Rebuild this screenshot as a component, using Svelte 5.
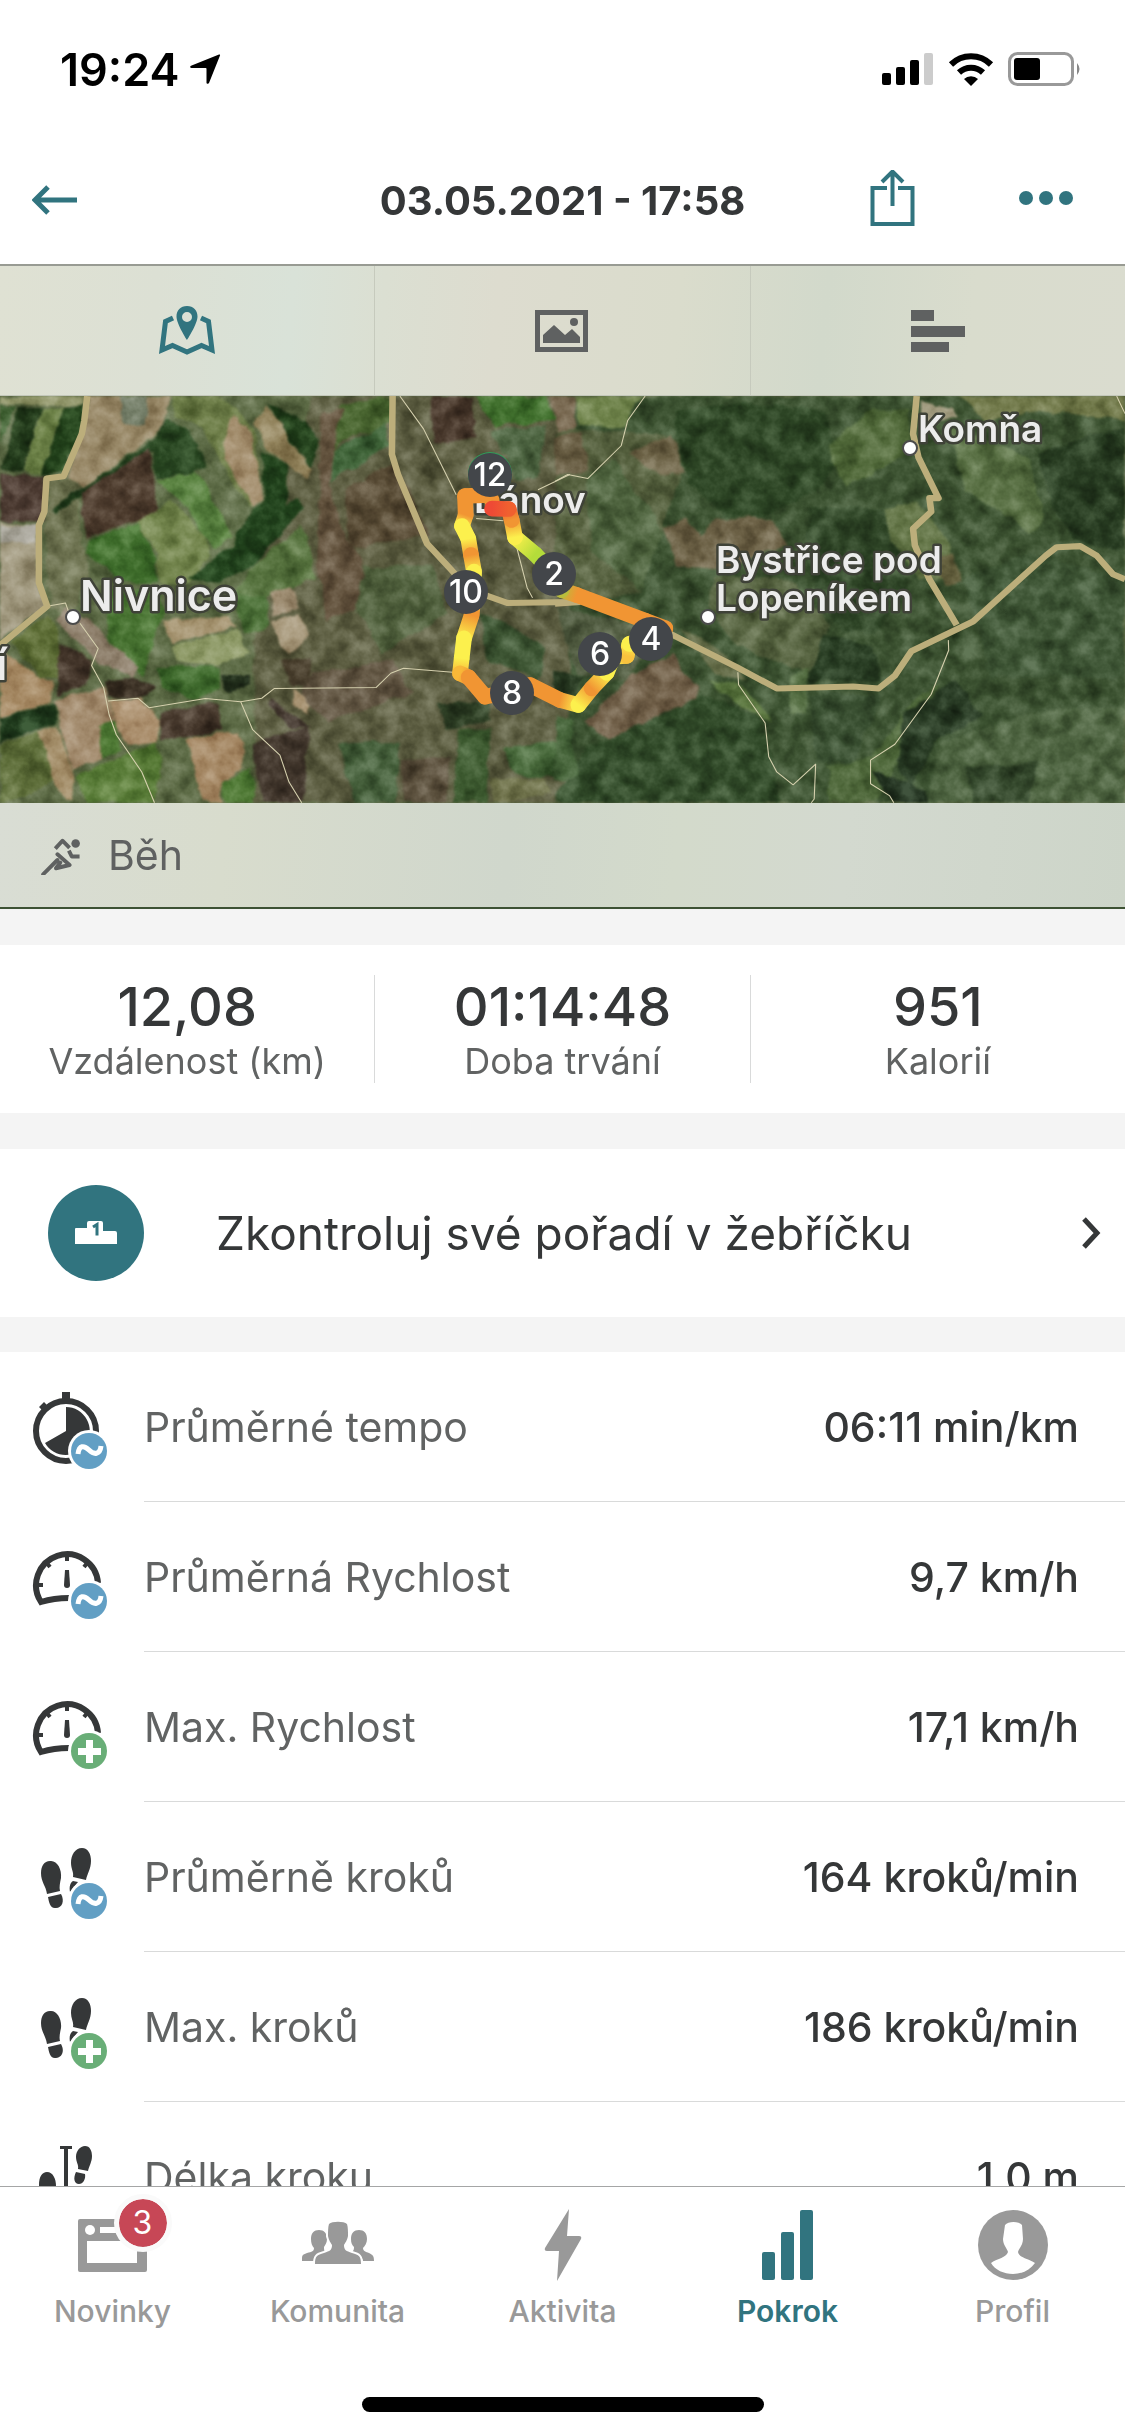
<script>
  const stats = [
    { value: "12,08", label: "Vzdálenost (km)" },
    { value: "01:14:48", label: "Doba trvání" },
    { value: "951", label: "Kalorií" },
  ];

  const details = [
    { icon: "watch", badge: "avg", label: "Průměrné tempo", value: "06:11 min/km" },
    { icon: "gauge", badge: "avg", label: "Průměrná Rychlost", value: "9,7 km/h" },
    { icon: "gauge", badge: "max", label: "Max. Rychlost", value: "17,1 km/h" },
    { icon: "steps", badge: "avg", label: "Průměrně kroků", value: "164 kroků/min" },
    { icon: "steps", badge: "max", label: "Max. kroků", value: "186 kroků/min" },
    { icon: "stride", badge: "", label: "Délka kroku", value: "1,0 m" },
  ];

  const nav = [
    { id: "news", label: "Novinky", count: 3 },
    { id: "community", label: "Komunita" },
    { id: "activity", label: "Aktivita" },
    { id: "progress", label: "Pokrok", active: true },
    { id: "profile", label: "Profil" },
  ];

  const markers = [
    { km: 12, x: 490, y: 475 },
    { km: 10, x: 466, y: 592 },
    { km: 8, x: 512, y: 693 },
    { km: 6, x: 600, y: 654 },
    { km: 4, x: 651, y: 639 },
    { km: 2, x: 554, y: 574 },
  ];

  const towns = [
    { x: 80, y: 611, size: 43, name: "Nivnice" },
    { x: -4, y: 680, size: 43, name: "í" },
    { x: 918, y: 442, size: 37, name: "Komňa" },
    { x: 716, y: 573, size: 37, name: "Bystřice pod" },
    { x: 716, y: 611, size: 37, name: "Lopeníkem" },
    { x: 474, y: 513, size: 37, name: "Bánov" },
  ];

  const dots = [
    [73, 617],
    [910, 448],
    [708, 617],
  ];

  const orange = "#f19533";
  const yellow = "#fcf04d";
  const red = "#ee4a35";

  // route points: x, y, pace colour
  const route = [
    [275, 180, orange],
    [265, 165, orange],
    [195, 168, orange],
    [197, 225, orange],
    [186, 258, yellow],
    [205, 296, yellow],
    [213, 345, orange],
    [222, 395, yellow],
    [222, 450, yellow],
    [215, 525, orange],
    [192, 595, yellow],
    [185, 655, yellow],
    [180, 700, "#f8b838"],
    [206, 712, orange],
    [255, 770, orange],
    [335, 755, orange],
    [390, 735, orange],
    [480, 780, orange],
    [535, 795, yellow],
    [575, 745, orange],
    [620, 698, yellow],
    [640, 650, yellow],
    [680, 648, "#f9c23e"],
    [688, 612, yellow],
    [750, 590, orange],
    [796, 565, orange],
    [735, 542, orange],
    [530, 465, orange],
    [485, 450, "#b9bd3c"],
    [460, 400, "#b4dc3a"],
    [405, 342, "#b4dc3a"],
    [345, 292, yellow],
    [335, 240, orange],
    [326, 207, "#f0602f"],
    [276, 206, red],
  ];

  const segments = route.slice(1).map((to, i) => ({ from: route[i], to }));

  const westFields = [
    ["#5b5c40", "860,18 1568,18 1568,1221 700,1221 700,500"],
    ["#8f9468", "0,18 240,18 230,45 0,40"],
    ["#39592c", "0,45 45,50 0,160"],
    ["#1f3618", "50,50 115,50 60,245 5,235"],
    ["#6d8248", "115,50 175,50 115,247 62,245"],
    ["#1f3d18", "175,50 230,45 222,130 178,245 115,250"],
    ["#4a3930", "0,250 125,255 120,390 0,385"],
    ["#a0987e", "0,390 100,400 105,560 125,635 0,745"],
    ["#aaa79c", "0,400 100,400 100,448 0,452"],
    ["#6d7250", "135,270 180,260 230,180 260,200 215,300 220,420 240,560 200,660 140,640 120,420"],
    ["#978766", "250,18 465,18 455,110 340,200 230,290 195,260"],
    ["#76806a", "330,18 410,18 400,110 340,100"],
    ["#203c1b", "465,85 420,150 140,350 150,365 260,290 430,180 520,130"],
    ["#4b3a2c", "415,170 425,270 430,370 235,440 225,300"],
    ["#26431f", "470,90 520,120 570,230 500,250 430,265 420,160"],
    ["#6f7f4a", "470,18 600,18 700,110 710,210 715,330 690,350 620,240 560,110 480,80"],
    ["#a08a69", "640,80 680,100 705,200 722,325 700,350 630,230 612,160"],
    ["#8f8059", "735,45 785,120 860,235 845,262 740,180 700,95"],
    ["#1d3917", "740,40 810,70 880,150 855,228 795,150"],
    ["#5c8443", "430,270 540,240 580,300 640,430 590,480 500,330"],
    ["#3d6b2a", "240,445 385,395 430,500 435,575 340,570 230,480"],
    ["#71834b", "380,390 470,320 560,430 580,490 520,575 440,575 430,480"],
    ["#55713d", "680,540 830,400 870,560 720,620 650,600"],
    ["#20401b", "720,180 790,220 790,340 820,320 835,350 700,520 600,570 520,560 640,460 650,420 725,330"],
    ["#45702f", "300,590 440,590 450,660 400,850 300,760"],
    ["#8b7c68", "185,640 240,680 380,820 360,850 260,800 150,680"],
    ["#a18f6b", "445,680 630,668 650,708 475,748"],
    ["#8b9764", "475,755 655,712 685,780 590,818 485,800"],
    ["#4c7038", "640,600 730,610 740,700 670,720"],
    ["#9c8b70", "740,600 800,580 825,640 750,665"],
    ["#a6977a", "745,685 820,660 850,725 800,785 775,775"],
    ["#5b6b34", "30,745 135,660 160,720 160,850 110,855"],
    ["#423429", "160,750 250,800 240,870 160,910"],
    ["#a2855f", "0,770 110,855 150,860 145,920 0,970"],
    ["#1e381b", "0,970 150,925 155,985 0,1045"],
    ["#5c6c38", "0,1050 105,1010 150,1160 20,1221 0,1221"],
    ["#a0886a", "150,920 290,880 320,1030 280,1095 200,1120"],
    ["#a18b66", "105,1010 160,990 208,1150 200,1221 185,1215 150,1165"],
    ["#4f7a35", "270,1000 310,985 335,1060 285,1090"],
    ["#33291e", "290,870 360,850 430,880 400,910 300,915"],
    ["#a98d6b", "300,920 385,912 440,980 430,1040 350,1050 315,1000"],
    ["#557834", "210,1140 430,1040 450,1110 420,1221 240,1221"],
    ["#3f6a2d", "430,820 605,820 605,890 540,915 450,880"],
    ["#202c1a", "610,840 690,840 690,870 620,900"],
    ["#45372b", "440,950 600,925 612,1010 440,1035"],
    ["#a1835f", "510,1030 660,1010 670,1120 610,1160 610,1221 560,1221"],
    ["#4d7733", "610,1160 690,1120 705,1221 620,1221"],
    ["#40352b", "690,1050 790,1010 850,1000 830,1221 720,1221"],
    ["#3d322a", "750,915 860,1000 800,1000 740,930"],
    ["#a48f6e", "800,890 855,910 850,960 800,930"],
    ["#453b2a", "775,800 860,790 850,880 800,880"],
    ["#48642f", "930,50 1070,18 1070,100 930,160 900,250"],
    ["#3f6338", "920,180 1060,100 1070,170 900,270"],
    ["#62523d", "880,60 940,60 900,280 960,460 1000,500 1000,640 900,680 870,500 880,300"],
    ["#574a34", "950,300 1085,210 1180,430 960,470"],
    ["#453529", "1185,18 1300,18 1310,140 1200,160"],
    ["#3f6e2c", "1310,18 1500,18 1530,90 1360,110"],
    ["#75654d", "1510,18 1568,18 1568,130 1530,90"],
    ["#4c6340", "1350,120 1500,110 1480,260 1420,270"],
    ["#625643", "860,830 1080,800 1130,900 900,980 830,900"],
    ["#4e5e3b", "1000,520 1190,520 1230,660 1050,780 980,650"],
    ["#3c5432", "1320,660 1420,700 1500,760 1480,860 1340,800"],
    ["#435d39", "930,1050 1100,1040 1090,1221 980,1221"],
    ["#5a4f3c", "1100,1100 1240,1080 1230,1221 1110,1221"],
    ["#3c592f", "1260,1000 1350,1010 1340,1221 1250,1221"],
    ["#2e3f25", "1200,930 1350,920 1350,980 1230,1000"],
    ["#6d7049", "1350,1150 1500,1150 1520,1200 1360,1221"],
    ["#47683a", "1380,1060 1568,1040 1568,1150 1420,1140"],
  ];

  const eastFields = [
    ["#3b5130", "40,18 1568,18 1568,1221 40,1221"],
    ["#545f3d", "0,110 300,130 350,250 300,400 240,600 60,620 0,560"],
    ["#6c8048", "60,18 240,18 190,110 60,100"],
    ["#75654d", "0,18 60,18 50,110 0,130"],
    ["#64593f", "0,140 70,120 90,240 0,250"],
    ["#4d623d", "90,260 160,200 300,420 240,600 100,480"],
    ["#6a6044", "320,130 360,250 290,260 210,190"],
    ["#2c4424", "330,60 500,40 740,60 780,200 720,300 560,380 470,370 380,290 340,180"],
    ["#4f6738", "750,170 880,50 975,60 980,180 800,290"],
    ["#a09a7e", "1010,30 1090,50 1110,80 1010,100"],
    ["#6f7748", "1110,18 1568,18 1568,90 1340,60 1180,90"],
    ["#566d41", "1080,100 1300,200 1350,380 1310,420 1130,300"],
    ["#263a20", "1330,180 1568,110 1568,480 1420,440 1350,300"],
    ["#6b6045", "300,400 360,380 400,430 440,380 600,380 640,460 450,530 330,520"],
    ["#566340", "440,550 640,560 760,700 700,840 500,760 420,640"],
    ["#2d4325", "700,350 900,350 980,600 870,720 790,720 680,500"],
    ["#5f7143", "910,350 1000,330 1080,440 1120,560 1000,560 920,450"],
    ["#65613f", "1040,500 1100,480 1120,570 1070,570"],
    ["#4f5a3f", "0,640 200,690 300,700 200,860 60,840"],
    ["#25361f", "0,830 80,850 50,900 0,890"],
    ["#6e5d46", "80,980 210,850 320,780 400,880 280,1070 210,1000 150,1040"],
    ["#626a46", "350,710 450,760 530,860 440,840"],
    ["#5f7a43", "420,860 510,870 605,985 500,930"],
    ["#304928", "90,1060 400,900 570,970 620,1221 0,1221 20,1170"],
    ["#456339", "0,960 50,980 60,1140 0,1160"],
    ["#536c41", "640,850 700,820 690,950 650,960"],
    ["#263a21", "740,720 880,760 900,860 700,860"],
    ["#384e30", "700,900 900,900 820,1100 720,1100"],
    ["#4d6639", "750,1110 870,1090 1000,900 1060,870 1000,1000 880,1221 750,1221"],
    ["#263822", "960,960 1100,860 1180,960 1050,1030 980,1180 940,1100"],
    ["#3d5434", "1130,560 1300,480 1568,560 1568,850 1200,850"],
    ["#4b613e", "1060,1040 1300,960 1568,930 1568,1221 1020,1221"],
    ["#34482c", "1130,1120 1330,1100 1300,1221 1150,1221"],
    ["#1f2e1d", "870,1130 1020,1180 1020,1221 930,1221"],
  ];

  const westRoads = {
    major: [
      "240,18 232,90 225,130 175,255 128,262 122,360 107,400 107,570 130,640 0,755",
      "1080,18 1078,190 1095,250 1175,455 1240,530 1290,590 1395,630 1568,627",
    ],
    minor: [
      "130,640 180,630 190,660",
      "220,690 270,765 252,815 285,880 300,960 320,1020 390,1130 425,1221",
      "297,920 380,912 410,940 565,913 662,922 720,912 755,883 1035,880 1075,838 1110,823 1245,835",
      "662,922 695,1005 770,1080 795,1160 830,1221",
      "1100,18 1165,115 1255,310",
      "1480,295 1568,250",
      "1310,380 1385,387",
      "1420,460 1450,585 1465,615",
    ],
  };

  const eastRoads = {
    major: [
      "995,18 985,130 1000,200 1055,320 1030,320 1035,360 985,410 990,460 1030,560 1105,695",
      "0,632 70,627",
      "300,712 500,820 610,883 820,877 890,883 935,845 980,773 1150,685 1350,490 1380,465 1445,462 1490,490 1535,545 1568,560",
    ],
    minor: [
      "248,18 200,90 182,165 90,262 35,250 0,270",
      "503,835 505,872 578,985 588,1085 610,1130 655,1168 717,1107 713,1210 705,1221",
      "1082,740 1083,770 1035,900 935,1048 868,1095 868,1165 920,1200 932,1221",
      "1545,18 1568,70",
    ],
  };

  const noRoads = { major: [], minor: [] };
</script>

{#snippet tile(x, fields, roads)}
  <svg {x} y="390" width="570" height="530" viewBox="0 0 1568 1568" preserveAspectRatio="none">
    {#each fields as [fill, points]}
      <polygon {fill} {points} />
    {/each}
    {#each roads.minor as points}
      <polyline class="minor-road" {points} />
    {/each}
    {#each roads.major as points}
      <polyline class="major-road" {points} />
    {/each}
  </svg>
{/snippet}

<div class="app">
  <div class="status">
    <div class="clock">
      19:24
      <svg width="32" height="32" viewBox="0 0 32 32" aria-hidden="true">
        <path d="M30 1.500c.8-.3 1.300.3 1 1L20 30c-.5 1.200-2.500 1-2.500-.3V16c0-.7-.3-1-1-1H2.500C1 15 .5 13.500 2 12.800z" />
      </svg>
    </div>
    <div class="signals">
      <svg width="52" height="34" viewBox="0 0 52 34" aria-hidden="true">
        <rect x="0" y="21" width="9" height="12" rx="2" />
        <rect x="14" y="15" width="9" height="18" rx="2" />
        <rect x="28" y="8" width="9" height="25" rx="2" />
        <rect x="42" y="1" width="9" height="32" rx="2" fill="#ccc" />
      </svg>
      <svg width="46" height="34" viewBox="0 0 46 34" aria-hidden="true">
        <path
          d="M3 12.500a28.500 28.500 0 0 1 40 0M11 20.500a17.500 17.500 0 0 1 24 0"
          fill="none"
          stroke="#000"
          stroke-width="6"
        />
        <path d="M16 27a10 10 0 0 1 14 0l-7 7z" />
      </svg>
      <svg width="74" height="34" viewBox="0 0 74 34" aria-hidden="true">
        <rect x="1.500" y="1.500" width="63" height="31" rx="8" fill="none" stroke="#999" stroke-width="3" />
        <rect x="6" y="6" width="26" height="22" rx="3" />
        <path d="M69 11q5 6 0 12z" fill="#888" />
      </svg>
    </div>
  </div>

  <header>
    <button class="back" aria-label="Zpět">
      <svg width="46" height="32" viewBox="0 0 46 32">
        <path d="M45 16H4M16 3 3 16l13 13" fill="none" stroke="currentColor" stroke-width="5" />
      </svg>
    </button>
    <h1>03.05.2021 - 17:58</h1>
    <div class="actions">
      <button aria-label="Sdílet">
        <svg width="46" height="60" viewBox="0 0 46 60">
          <path
            d="M17 18H2.500v36h40V18H28M22.500 36V2M12 12 22.500 1.500 33 12"
            fill="none"
            stroke="currentColor"
            stroke-width="4"
          />
        </svg>
      </button>
      <button aria-label="Více">
        <svg width="54" height="60" viewBox="0 0 54 60" fill="currentColor">
          <circle cx="7" cy="28" r="7" />
          <circle cx="27" cy="28" r="7" />
          <circle cx="47" cy="28" r="7" />
        </svg>
      </button>
    </div>
  </header>

  <main>
    <div class="tabs">
      <button class="selected" aria-label="Mapa">
        <svg width="58" height="52" viewBox="0 0 58 52" fill="none" stroke="currentColor" stroke-width="5">
          <path d="M15 13 7.500 16.500 4 45l10.500-4.500L29 47l14.500-6.500L54 45l-3.500-28.500L43 13" />
          <path
            d="M29 1C22.500 1 18.500 5.500 18.500 11.500 18.500 19 29 35 29 35s10.500-16 10.500-23.500C39.500 5.500 35.500 1 29 1zm0 6a5 5 0 1 1 0 10 5 5 0 0 1 0-10z"
            fill="currentColor"
            stroke="none"
          />
        </svg>
      </button>
      <button aria-label="Fotky">
        <svg width="54" height="44" viewBox="0 0 54 44" fill="currentColor">
          <path d="M0 1h53v42H0zM5 6v32h43V6z" fill-rule="evenodd" />
          <path d="M8 34v-8l11-10 11 10 7-6 8 8v6z" />
          <circle cx="39" cy="13" r="4" />
        </svg>
      </button>
      <button aria-label="Grafy">
        <svg width="54" height="44" viewBox="0 0 54 44" fill="currentColor">
          <path d="M0 1h23v11H0zM0 17h54v11H0zM0 33h38v10H0z" />
        </svg>
      </button>
    </div>

    <svg class="map" viewBox="0 396 1125 407" preserveAspectRatio="xMidYMid slice" role="img" aria-label="Trasa běhu">
      <defs>
        <filter id="grain" x="0" y="0" width="100%" height="100%" color-interpolation-filters="sRGB">
          <feTurbulence type="fractalNoise" baseFrequency="0.050" numOctaves="4" seed="21" />
          <feColorMatrix values="1.400 0 0 0 -0.150  1.400 0 0 0 -0.150  1.400 0 0 0 -0.150  0 0 0 0 1" />
        </filter>
        <filter id="edges" x="0" y="0" width="100%" height="100%" color-interpolation-filters="sRGB">
          <feTurbulence type="fractalNoise" baseFrequency="0.050" numOctaves="3" seed="3" result="noise" />
          <feDisplacementMap in="SourceGraphic" in2="noise" scale="10" xChannelSelector="R" yChannelSelector="G" />
          <feGaussianBlur stdDeviation="1" />
        </filter>
        {#each segments as { from, to }, i}
          <linearGradient
            id="pace-{i}"
            gradientUnits="userSpaceOnUse"
            x1={from[0]}
            y1={from[1]}
            x2={to[0]}
            y2={to[1]}
          >
            <stop offset="0" stop-color={from[2]} />
            <stop offset="1" stop-color={to[2]} />
          </linearGradient>
        {/each}
      </defs>

      <rect y="390" width="1125" height="420" fill="#5c6a45" />
      <g filter="url(#edges)">
        {@render tile(0, westFields, noRoads)}
        {@render tile(555, eastFields, noRoads)}
      </g>
      <rect class="grain" y="390" width="1125" height="420" filter="url(#grain)" />
      {@render tile(0, [], westRoads)}
      {@render tile(555, [], eastRoads)}

      {#each dots as [cx, cy]}
        <circle {cx} {cy} r="7" fill="#fff" stroke="#4b4b4b" stroke-width="2" />
      {/each}
      {#each towns as town}
        <text class="town" x={town.x} y={town.y} font-size={town.size}>{town.name}</text>
      {/each}

      <svg x="400" y="440" width="300" height="300" viewBox="0 0 900 900">
        {#each segments as { from, to }, i}
          <path
            d="M{from[0]} {from[1]}L{to[0]} {to[1]}"
            stroke="url(#pace-{i})"
            stroke-width="47"
            stroke-linecap="round"
          />
        {/each}
      </svg>

      <circle cx="490" cy="474" r="22" fill="#2f9e5b" />
      {#each markers as marker}
        <circle cx={marker.x} cy={marker.y} r="22" fill="#43464a" />
        <text class="km" x={marker.x} y={marker.y + 11}>{marker.km}</text>
      {/each}
    </svg>

    <div class="sport">
      <svg width="40" height="40" viewBox="0 0 112 112" fill="none" stroke="currentColor" stroke-width="11" aria-hidden="true">
        <circle cx="97" cy="24" r="12" fill="currentColor" stroke="none" />
        <path d="M40 38 60 16l20 20M78 44l8 16h22" stroke-linejoin="round" />
        <path d="M6 110 46 70M46 54 80 84l-38 9 12-16" stroke-linejoin="round" stroke-linecap="round" />
      </svg>
      <span>Běh</span>
    </div>

    <dl class="stats">
      {#each stats as stat}
        <div class="stat">
          <dt>{stat.label}</dt>
          <dd>{stat.value}</dd>
        </div>
      {/each}
    </dl>

    <a class="ranking" href="#ranking">
      <span class="podium">
        <svg width="42" height="24" viewBox="0 0 42 24" aria-hidden="true">
          <path d="M1 7h11V2q0-2 2-2h12q2 0 2 2v8h12q2 0 2 2v11H0V8q0-1 1-1z" fill="#fff" />
          <path d="M18 6l4-2.500v11" fill="none" stroke="#31747f" stroke-width="3" />
        </svg>
      </span>
      <span class="ranking-text">Zkontroluj své pořadí v žebříčku</span>
      <svg width="20" height="32" viewBox="0 0 20 32" aria-hidden="true">
        <path d="M3 2l13 14L3 30" fill="none" stroke="currentColor" stroke-width="5" />
      </svg>
    </a>

    <ul class="details">
      {#each details as row}
        <li>
          <svg class="row-icon" width="80" height="90" viewBox="0 0 80 90" aria-hidden="true">
            {#if row.icon === "watch"}
              <circle cx="34" cy="49" r="30" class="line" />
              <path d="M34 49V25A24 24 0 1 1 13 61z" />
              <path d="M30 10h8v9h-8zM7 25l5-5 6 6-5 5z" />
            {:else if row.icon === "gauge"}
              <path class="line" d="M66 51A31 31 0 1 0 9 70Q22 66 37 66" />
              <path d="M35 22v7M4 53h7M14 30l4 5M56 30l-4 5" fill="none" stroke="#353738" stroke-width="4" />
              <path d="M33 38h4l1 15a3 3 0 0 1-6 0z" />
            {:else if row.icon === "steps"}
              <path d="M18 29c7-1 12 8 11 17-1 5-2 9-1 13l-13 3C14 54 9 50 9 41c0-7 3-12 9-12zM16 65l13-3c4 7 1 14-5 14-6 1-7-6-8-11z" />
              <path d="M50 16c6 0 9 6 9 13 0 8-4 13-5 19l-13-3c1-5-2-8-2-14 0-8 4-15 11-15zM41 49l5 1-8 10c-1-5 0-9 3-11z" />
            {:else}
              <path d="M28 14h12v3h-4v60h-4V17h-4z" />
              <path d="M53 14c5 0 7 5 7 10 0 6-3 10-4 15l-10-2c1-4-2-7-2-12 0-6 4-11 9-11zM44 40l9 2c1 5-2 10-6 10-5 0-6-6-3-12z" />
              <path d="M15 40c6 0 9 7 9 14l-2 14-11 2c0-7-4-10-4-17 0-8 3-13 8-13z" />
            {/if}
            {#if row.badge}
              <circle cx="57" cy="69" r="21" fill="#fff" />
              <circle cx="57" cy="69" r="18" fill={row.badge === "avg" ? "#629fc4" : "#69ae77"} />
            {/if}
            {#if row.badge === "avg"}
              <path d="M46 72c1-9 6-9 11-4s11 5 12-4" fill="none" stroke="#fff" stroke-width="5" />
            {:else if row.badge === "max"}
              <path d="M54 58h7v8h8v7h-8v8h-7v-8h-8v-7h8z" fill="#fff" />
            {/if}
          </svg>
          <div class="row-body">
            <span class="row-label">{row.label}</span>
            <span class="row-value">{row.value}</span>
          </div>
        </li>
      {/each}
    </ul>
  </main>

  <nav>
    <div class="nav-items">
      {#each nav as item}
        <a href="#{item.id}" class:active={item.active}>
          <span class="nav-icon">
            <svg width="72" height="72" viewBox="0 0 72 72" fill="currentColor" aria-hidden="true">
              {#if item.id === "news"}
                <path
                  d="M3 10h65q2 0 2 2v49q0 2-2 2H3q-2 0-2-2V12q0-2 2-2zM10 32v22h50V32z"
                  fill-rule="evenodd"
                />
                <path d="M23 18h20v6H23z" fill="#fff" />
                <circle cx="13" cy="21" r="5" fill="#fff" />
              {:else if item.id === "community"}
                <path d="M17 21c5 0 8 3 8 9 0 4-2 6-3 8 0 2 0 3 1 5-6 3-10 4-11 9H0c0-6 0-6 5-8 5-1 7-2 7-5-2-2-3-5-3-9 0-6 3-9 8-9z" />
                <path d="M57 21c5 0 8 3 8 9 0 4-2 7-4 9 0 3 3 4 6 5 4 2 5 3 5 8H61c-1-5-5-6-11-9 2-2 2-3 2-5-2-2-3-4-3-8 0-6 3-9 8-9z" />
                <path
                  d="M27 15c3-3 15-3 18 0 1 3 1 8 1 12-1 5-3 7-4 9 0 5 2 6 8 8 7 2 9 3 9 11H13c0-8 2-9 9-11 6-2 8-3 8-8-1-2-3-4-4-9 0-4 0-9 1-12z"
                  stroke="#fff"
                  stroke-width="4"
                  paint-order="stroke"
                />
              {:else if item.id === "activity"}
                <path d="M42 0 18 39q-1 3 2 3h12l-2 30 24-42q1-3-2-3H40z" />
              {:else if item.id === "progress"}
                <rect x="10" y="43" width="13" height="28" rx="2" />
                <rect x="29" y="23" width="13" height="48" rx="2" />
                <rect x="48" y="1" width="13" height="70" rx="2" />
              {:else}
                <circle cx="36" cy="36" r="35" />
                <path
                  d="M28 16c3-4 14-4 17 0l1 14c0 6-4 9-5 13 1 6 10 6 17 11-5 7-13 11-22 11S18 61 14 54c7-5 15-5 17-11-1-4-5-7-5-13z"
                  fill="#fff"
                />
              {/if}
            </svg>
            {#if item.count}
              <span class="count">{item.count}</span>
            {/if}
          </span>
          {item.label}
        </a>
      {/each}
    </div>
    <div class="home-bar"></div>
  </nav>
</div>

<style>
  :global(body) {
    margin: 0;
    background: #fff;
  }

  .app {
    display: flex;
    flex-direction: column;
    height: 100vh;
    font-family: Inter, "Liberation Sans", sans-serif;
    color: #353738;
    background: #fff;
  }

  button {
    display: flex;
    align-items: center;
    justify-content: center;
    padding: 0;
    border: 0;
    background: none;
    color: inherit;
  }

  svg {
    flex: none;
  }

  .status {
    display: flex;
    align-items: center;
    justify-content: space-between;
    height: 138px;
    padding: 0 43px 0 60px;
    box-sizing: border-box;
    flex: none;
    color: #000;
  }

  .clock {
    display: flex;
    align-items: center;
    gap: 10px;
    font-size: 45px;
    font-weight: 600;
  }

  .signals {
    display: flex;
    gap: 14px;
  }

  header {
    display: grid;
    grid-template-columns: 1fr auto 1fr;
    align-items: center;
    height: 126px;
    padding: 0 32px 2px;
    flex: none;
    box-sizing: border-box;
    color: #31747f;
  }

  .back {
    justify-self: start;
  }

  h1 {
    margin: 0;
    font-size: 40px;
    font-weight: 700;
    color: #353738;
  }

  .actions {
    display: flex;
    justify-content: flex-end;
    gap: 103px;
    padding-right: 20px;
  }

  main {
    flex: 1;
    min-height: 0;
    overflow: hidden;
    background: #f4f4f4;
  }

  .tabs {
    display: flex;
    height: 132px;
    box-sizing: border-box;
    border-top: 2px solid #989b93;
    border-bottom: 1px solid #c3c7ba;
    color: #5f6161;
    background: linear-gradient(
      95deg,
      #dfe1d3 0%,
      #dce0d4 14%,
      #d9e2d8 26%,
      #dbdfd2 34%,
      #dddccf 44%,
      #dadccc 60%,
      #d2d9cb 73%,
      #d9dccd 86%,
      #dadccf 100%
    );
  }

  .tabs button {
    flex: 1;
  }

  .tabs button:not(:last-child) {
    border-right: 1px solid #c6cabd;
  }

  .tabs .selected {
    color: #31747f;
  }

  .map {
    display: block;
    width: 100%;
    height: auto;
  }

  .grain {
    mix-blend-mode: soft-light;
    opacity: 0.6;
  }

  .major-road,
  .minor-road {
    fill: none;
    stroke-linejoin: round;
  }

  .major-road {
    stroke: #bcae7b;
    stroke-width: 18px;
  }

  .minor-road {
    stroke: #d5d0ae;
    stroke-width: 3px;
  }

  .town {
    fill: #ececec;
    stroke: #3f4238;
    stroke-width: 5px;
    stroke-linejoin: round;
    paint-order: stroke;
    font-weight: 600;
  }

  .km {
    fill: #fff;
    font-size: 32px;
    font-weight: 500;
    text-anchor: middle;
  }

  .sport {
    display: flex;
    align-items: center;
    gap: 27px;
    height: 106px;
    padding: 0 41px;
    box-sizing: border-box;
    border-bottom: 2px solid #3d5234;
    font-size: 41px;
    color: #5f6161;
    background: linear-gradient(95deg, #d9ddd4 0%, #d8dccd 20%, #d0d7cc 45%, #d3dacb 60%, #d3d9cf 75%, #cdd5c9 100%);
  }

  .stats {
    display: flex;
    margin: 36px 0;
    padding: 30px 0;
    background: #fff;
  }

  .stat {
    display: flex;
    flex: 1;
    flex-direction: column-reverse;
    align-items: center;
    height: 108px;
  }

  .stat:not(:last-child) {
    border-right: 1px solid #d9dada;
  }

  .stat dt {
    font-size: 36px;
    line-height: 44px;
    color: #616363;
  }

  .stat dd {
    margin: 0;
    font-size: 54px;
    font-weight: 500;
    line-height: 64px;
  }

  .ranking {
    display: flex;
    align-items: center;
    height: 168px;
    padding: 0 24px 0 48px;
    background: #fff;
    color: inherit;
    text-decoration: none;
  }

  .podium {
    display: flex;
    align-items: center;
    justify-content: center;
    width: 96px;
    height: 96px;
    border-radius: 50%;
    background: #31747f;
  }

  .ranking-text {
    flex: 1;
    padding-left: 72px;
    font-size: 46px;
  }

  .details {
    margin: 35px 0 0;
    padding: 0;
    list-style: none;
    background: #fff;
  }

  .details li {
    display: flex;
    align-items: center;
    height: 150px;
    padding-left: 32px;
  }

  .row-icon {
    margin-right: 32px;
    fill: #353738;
  }

  .line {
    fill: none;
    stroke: #353738;
    stroke-width: 6px;
  }

  .row-body {
    display: flex;
    flex: 1;
    align-items: center;
    justify-content: space-between;
    height: 100%;
    padding-right: 46px;
    box-sizing: border-box;
    border-bottom: 1px solid #d9dada;
    font-size: 41px;
  }

  .row-label {
    color: #616363;
  }

  .row-value {
    font-weight: 500;
  }

  nav {
    flex: none;
    padding: 22px 0 24px;
    border-top: 1px solid #a5a6a6;
    background: #fff;
  }

  .nav-items {
    display: flex;
  }

  .nav-items a {
    display: flex;
    flex: 1;
    flex-direction: column;
    align-items: center;
    gap: 12px;
    font-size: 30px;
    font-weight: 500;
    line-height: 36px;
    color: #999;
    text-decoration: none;
  }

  .nav-items .active {
    font-weight: 600;
    color: #31747f;
  }

  .nav-icon {
    position: relative;
    display: flex;
  }

  .count {
    position: absolute;
    top: -15px;
    right: -23px;
    width: 48px;
    height: 48px;
    border: 5px solid #fafafa;
    border-radius: 50%;
    background: #c74756;
    background-clip: padding-box;
    color: #fff;
    font-size: 32px;
    font-weight: 400;
    line-height: 48px;
    text-align: center;
  }

  .home-bar {
    width: 402px;
    height: 15px;
    margin: 68px auto 0;
    border-radius: 8px;
    background: #000;
  }
</style>
